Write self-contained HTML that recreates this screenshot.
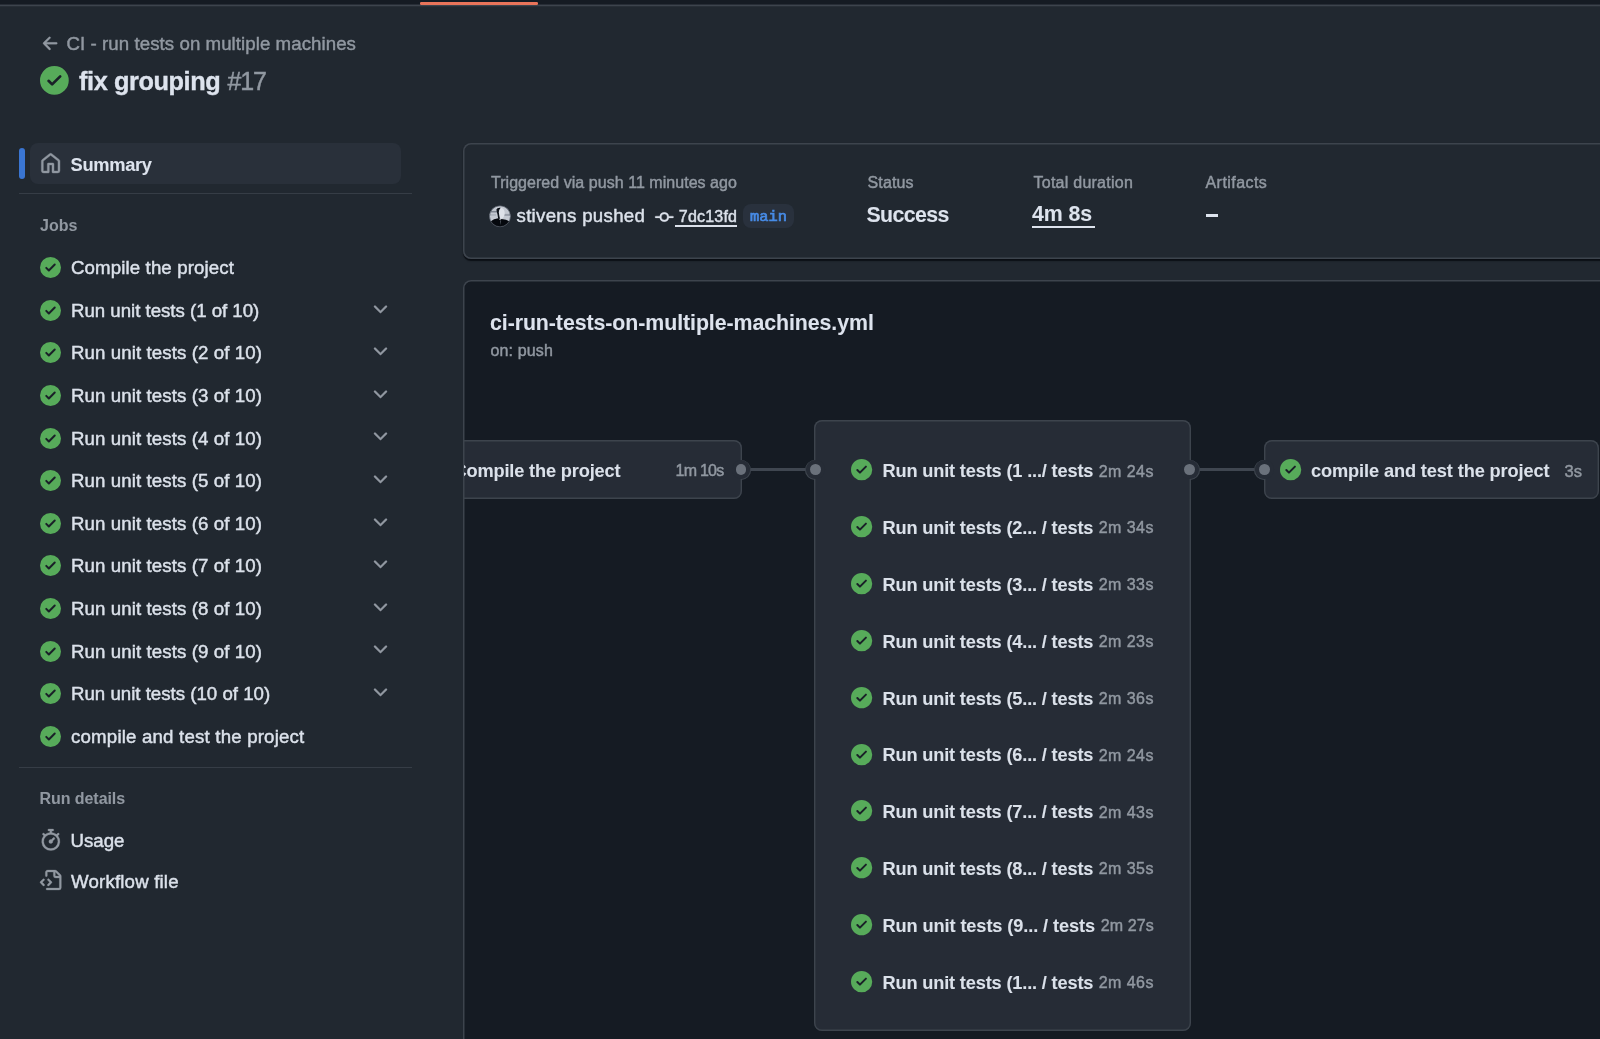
<!DOCTYPE html>
<html lang="en">
<head>
<meta charset="utf-8">
<title>fix grouping #17</title>
<style>
*{box-sizing:border-box;margin:0;padding:0}
html,body{width:1600px;height:1039px;overflow:hidden;background:#212830}
body{position:relative;font-family:"Liberation Sans",sans-serif;color:#dbe1ea}
#root{position:absolute;left:0;top:0;width:1600px;height:1039px;will-change:transform}
.abs{position:absolute}
.t{position:absolute;white-space:nowrap;line-height:1;-webkit-text-stroke:0.45px}
.t.bd{-webkit-text-stroke:0.05px}
svg{position:absolute;display:block;overflow:visible}
#strip{left:0;top:0;width:1600px;height:4px;background:#151b23}
#stripb{left:0;top:4px;width:1600px;height:3px;background:linear-gradient(#272d36 0 1px,#3d444d 1px 2px,#282f37 2px 3px)}
#tab{left:420.4px;top:1.8px;width:118px;height:3.2px;background:#e9745a;border-radius:1.3px}
#ind{left:19px;top:147.5px;width:5.5px;height:31.5px;background:#3a75d1;border-radius:3px}
#sel{left:30px;top:142.5px;width:370.5px;height:41.5px;background:#29303a;border-radius:8px}
.hr{height:1px;background:#363d46;left:19px;width:393px}
#card1{left:463.2px;top:142.8px;width:1160px;height:116.6px;border-radius:8px;background:#212830;box-shadow:inset 0 0 0 1.5px #3d444d,0 1.5px 1.2px rgba(1,4,9,.7)}
#card2{left:463.2px;top:280px;width:1160px;height:800px;border-radius:8px;background:#151b23}
#card2b{left:463.2px;top:280px;width:1160px;height:800px;border-radius:8px;box-shadow:inset 0 0 0 1.5px #3d444d}
#clip{left:463.8px;top:282px;width:1136px;height:757px;overflow:hidden}
.node{position:absolute;background:#262c36;box-shadow:inset 0 0 0 1.4px #3d444d;border-radius:8px}
.dot{position:absolute;width:10.8px;height:10.8px;border-radius:50%;background:#6a717b;box-shadow:0 0 0 4px #262c36}
.ring{position:absolute;width:20px;height:20px;border-radius:50%;background:#262c36;box-shadow:inset 0 0 0 1.4px #3d444d}
.line{position:absolute;height:2.7px;background:#3f4650}
</style>
</head>
<body>
<div id="root">
<div id="strip" class="abs"></div>
<div id="stripb" class="abs"></div>
<div id="tab" class="abs"></div>

<svg style="left:39.735px;top:32.535px" width="21.33" height="21.33" viewBox="0 0 16 16" fill="#9198a1" stroke="#9198a1" stroke-width="0.2"><path d="M7.78 12.53a.75.75 0 0 1-1.06 0L2.47 8.28a.75.75 0 0 1 0-1.06l4.25-4.25a.751.751 0 0 1 1.042.018.751.751 0 0 1 .018 1.042L4.81 7h7.44a.75.75 0 0 1 0 1.5H4.81l2.97 2.97a.75.75 0 0 1 0 1.06Z"/></svg>
<div class="t" id="crumb" style="left:66.5px;top:34.8958px;font-size:18.67px;color:#9198a1;letter-spacing:0.065px;">CI - run tests on multiple machines</div>
<svg style="left:40.025px;top:66.225px" width="28.75" height="28.75" viewBox="0 0 16 16"><circle cx="8" cy="8" r="6" fill="#1a2028"/><path fill="#57ab5a" d="M8 16A8 8 0 1 1 8 0a8 8 0 0 1 0 16Zm3.78-9.72a.751.751 0 0 0-.018-1.042.751.751 0 0 0-1.042-.018L6.75 9.19 5.28 7.72a.751.751 0 0 0-1.042.018.751.751 0 0 0-.018 1.042l2 2a.75.75 0 0 0 1.06 0Z"/></svg>
<div class="t bd" id="title" style="left:79px;top:68.5836px;font-size:25.3px;color:#dde3ed;font-weight:bold;letter-spacing:-0.4px;-webkit-text-stroke:0.35px;">fix grouping</div>
<div class="t" id="num" style="left:227.5px;top:68.8375px;font-size:25px;color:#9198a1;letter-spacing:-1.1px;">#17</div>
<div id="ind" class="abs"></div><div id="sel" class="abs"></div>
<svg style="left:39.7px;top:152.75px" width="21.3" height="21.3" viewBox="0 0 16 16" fill="#9198a1" stroke="#9198a1" stroke-width="0.3"><path d="M6.906.664a1.749 1.749 0 0 1 2.187 0l5.25 4.2c.415.332.657.835.657 1.367v7.019A1.75 1.75 0 0 1 13.25 15h-3.5a.75.75 0 0 1-.75-.75V9H7v5.25a.75.75 0 0 1-.75.75h-3.5A1.75 1.75 0 0 1 1 13.25V6.23c0-.531.242-1.034.657-1.366l5.25-4.2Zm1.25 1.171a.25.25 0 0 0-.312 0l-5.25 4.2a.25.25 0 0 0-.094.196v7.019c0 .138.112.25.25.25H5.5V8.25a.75.75 0 0 1 .75-.75h3.5a.75.75 0 0 1 .75.75v5.25h2.75a.25.25 0 0 0 .25-.25V6.23a.25.25 0 0 0-.094-.195Z"/></svg>
<div class="t bd" id="summary" style="left:70.5px;top:156.309px;font-size:18.3px;color:#dde3ed;font-weight:bold;letter-spacing:-0.3px;">Summary</div>
<div class="abs hr" style="top:193px"></div>
<div class="t bd" id="jobs" style="left:40px;top:218.256px;font-size:16px;color:#9198a1;font-weight:bold;">Jobs</div>
<svg style="left:39.9px;top:257.2px" width="21" height="21" viewBox="0 0 16 16"><circle cx="8" cy="8" r="6" fill="#1a2028"/><path fill="#57ab5a" d="M8 16A8 8 0 1 1 8 0a8 8 0 0 1 0 16Zm3.78-9.72a.751.751 0 0 0-.018-1.042.751.751 0 0 0-1.042-.018L6.75 9.19 5.28 7.72a.751.751 0 0 0-1.042.018.751.751 0 0 0-.018 1.042l2 2a.75.75 0 0 0 1.06 0Z"/></svg>
<div class="t" id="job0" style="left:71px;top:259.196px;font-size:18.67px;color:#dbe1ea;letter-spacing:0.12px;">Compile the project</div>
<svg style="left:39.9px;top:299.8px" width="21" height="21" viewBox="0 0 16 16"><circle cx="8" cy="8" r="6" fill="#1a2028"/><path fill="#57ab5a" d="M8 16A8 8 0 1 1 8 0a8 8 0 0 1 0 16Zm3.78-9.72a.751.751 0 0 0-.018-1.042.751.751 0 0 0-1.042-.018L6.75 9.19 5.28 7.72a.751.751 0 0 0-1.042.018.751.751 0 0 0-.018 1.042l2 2a.75.75 0 0 0 1.06 0Z"/></svg>
<div class="t" id="job1" style="left:71px;top:301.796px;font-size:18.67px;color:#dbe1ea;letter-spacing:-0.02px;">Run unit tests (1 of 10)</div>
<svg style="left:369.8px;top:298.6px" width="21" height="21" viewBox="0 0 16 16" fill="#9198a1" stroke="#9198a1" stroke-width="0.2"><path d="M12.78 5.22a.749.749 0 0 1 0 1.06l-4.25 4.25a.749.749 0 0 1-1.06 0L3.22 6.28a.749.749 0 1 1 1.06-1.06L8 8.939l3.72-3.719a.749.749 0 0 1 1.06 0Z"/></svg>
<svg style="left:39.9px;top:342.4px" width="21" height="21" viewBox="0 0 16 16"><circle cx="8" cy="8" r="6" fill="#1a2028"/><path fill="#57ab5a" d="M8 16A8 8 0 1 1 8 0a8 8 0 0 1 0 16Zm3.78-9.72a.751.751 0 0 0-.018-1.042.751.751 0 0 0-1.042-.018L6.75 9.19 5.28 7.72a.751.751 0 0 0-1.042.018.751.751 0 0 0-.018 1.042l2 2a.75.75 0 0 0 1.06 0Z"/></svg>
<div class="t" id="job2" style="left:71px;top:344.396px;font-size:18.67px;color:#dbe1ea;letter-spacing:0.1px;">Run unit tests (2 of 10)</div>
<svg style="left:369.8px;top:341.2px" width="21" height="21" viewBox="0 0 16 16" fill="#9198a1" stroke="#9198a1" stroke-width="0.2"><path d="M12.78 5.22a.749.749 0 0 1 0 1.06l-4.25 4.25a.749.749 0 0 1-1.06 0L3.22 6.28a.749.749 0 1 1 1.06-1.06L8 8.939l3.72-3.719a.749.749 0 0 1 1.06 0Z"/></svg>
<svg style="left:39.9px;top:385px" width="21" height="21" viewBox="0 0 16 16"><circle cx="8" cy="8" r="6" fill="#1a2028"/><path fill="#57ab5a" d="M8 16A8 8 0 1 1 8 0a8 8 0 0 1 0 16Zm3.78-9.72a.751.751 0 0 0-.018-1.042.751.751 0 0 0-1.042-.018L6.75 9.19 5.28 7.72a.751.751 0 0 0-1.042.018.751.751 0 0 0-.018 1.042l2 2a.75.75 0 0 0 1.06 0Z"/></svg>
<div class="t" id="job3" style="left:71px;top:386.996px;font-size:18.67px;color:#dbe1ea;letter-spacing:0.1px;">Run unit tests (3 of 10)</div>
<svg style="left:369.8px;top:383.8px" width="21" height="21" viewBox="0 0 16 16" fill="#9198a1" stroke="#9198a1" stroke-width="0.2"><path d="M12.78 5.22a.749.749 0 0 1 0 1.06l-4.25 4.25a.749.749 0 0 1-1.06 0L3.22 6.28a.749.749 0 1 1 1.06-1.06L8 8.939l3.72-3.719a.749.749 0 0 1 1.06 0Z"/></svg>
<svg style="left:39.9px;top:427.6px" width="21" height="21" viewBox="0 0 16 16"><circle cx="8" cy="8" r="6" fill="#1a2028"/><path fill="#57ab5a" d="M8 16A8 8 0 1 1 8 0a8 8 0 0 1 0 16Zm3.78-9.72a.751.751 0 0 0-.018-1.042.751.751 0 0 0-1.042-.018L6.75 9.19 5.28 7.72a.751.751 0 0 0-1.042.018.751.751 0 0 0-.018 1.042l2 2a.75.75 0 0 0 1.06 0Z"/></svg>
<div class="t" id="job4" style="left:71px;top:429.596px;font-size:18.67px;color:#dbe1ea;letter-spacing:0.1px;">Run unit tests (4 of 10)</div>
<svg style="left:369.8px;top:426.4px" width="21" height="21" viewBox="0 0 16 16" fill="#9198a1" stroke="#9198a1" stroke-width="0.2"><path d="M12.78 5.22a.749.749 0 0 1 0 1.06l-4.25 4.25a.749.749 0 0 1-1.06 0L3.22 6.28a.749.749 0 1 1 1.06-1.06L8 8.939l3.72-3.719a.749.749 0 0 1 1.06 0Z"/></svg>
<svg style="left:39.9px;top:470.2px" width="21" height="21" viewBox="0 0 16 16"><circle cx="8" cy="8" r="6" fill="#1a2028"/><path fill="#57ab5a" d="M8 16A8 8 0 1 1 8 0a8 8 0 0 1 0 16Zm3.78-9.72a.751.751 0 0 0-.018-1.042.751.751 0 0 0-1.042-.018L6.75 9.19 5.28 7.72a.751.751 0 0 0-1.042.018.751.751 0 0 0-.018 1.042l2 2a.75.75 0 0 0 1.06 0Z"/></svg>
<div class="t" id="job5" style="left:71px;top:472.196px;font-size:18.67px;color:#dbe1ea;letter-spacing:0.1px;">Run unit tests (5 of 10)</div>
<svg style="left:369.8px;top:469px" width="21" height="21" viewBox="0 0 16 16" fill="#9198a1" stroke="#9198a1" stroke-width="0.2"><path d="M12.78 5.22a.749.749 0 0 1 0 1.06l-4.25 4.25a.749.749 0 0 1-1.06 0L3.22 6.28a.749.749 0 1 1 1.06-1.06L8 8.939l3.72-3.719a.749.749 0 0 1 1.06 0Z"/></svg>
<svg style="left:39.9px;top:512.8px" width="21" height="21" viewBox="0 0 16 16"><circle cx="8" cy="8" r="6" fill="#1a2028"/><path fill="#57ab5a" d="M8 16A8 8 0 1 1 8 0a8 8 0 0 1 0 16Zm3.78-9.72a.751.751 0 0 0-.018-1.042.751.751 0 0 0-1.042-.018L6.75 9.19 5.28 7.72a.751.751 0 0 0-1.042.018.751.751 0 0 0-.018 1.042l2 2a.75.75 0 0 0 1.06 0Z"/></svg>
<div class="t" id="job6" style="left:71px;top:514.796px;font-size:18.67px;color:#dbe1ea;letter-spacing:0.1px;">Run unit tests (6 of 10)</div>
<svg style="left:369.8px;top:511.6px" width="21" height="21" viewBox="0 0 16 16" fill="#9198a1" stroke="#9198a1" stroke-width="0.2"><path d="M12.78 5.22a.749.749 0 0 1 0 1.06l-4.25 4.25a.749.749 0 0 1-1.06 0L3.22 6.28a.749.749 0 1 1 1.06-1.06L8 8.939l3.72-3.719a.749.749 0 0 1 1.06 0Z"/></svg>
<svg style="left:39.9px;top:555.4px" width="21" height="21" viewBox="0 0 16 16"><circle cx="8" cy="8" r="6" fill="#1a2028"/><path fill="#57ab5a" d="M8 16A8 8 0 1 1 8 0a8 8 0 0 1 0 16Zm3.78-9.72a.751.751 0 0 0-.018-1.042.751.751 0 0 0-1.042-.018L6.75 9.19 5.28 7.72a.751.751 0 0 0-1.042.018.751.751 0 0 0-.018 1.042l2 2a.75.75 0 0 0 1.06 0Z"/></svg>
<div class="t" id="job7" style="left:71px;top:557.396px;font-size:18.67px;color:#dbe1ea;letter-spacing:0.1px;">Run unit tests (7 of 10)</div>
<svg style="left:369.8px;top:554.2px" width="21" height="21" viewBox="0 0 16 16" fill="#9198a1" stroke="#9198a1" stroke-width="0.2"><path d="M12.78 5.22a.749.749 0 0 1 0 1.06l-4.25 4.25a.749.749 0 0 1-1.06 0L3.22 6.28a.749.749 0 1 1 1.06-1.06L8 8.939l3.72-3.719a.749.749 0 0 1 1.06 0Z"/></svg>
<svg style="left:39.9px;top:598px" width="21" height="21" viewBox="0 0 16 16"><circle cx="8" cy="8" r="6" fill="#1a2028"/><path fill="#57ab5a" d="M8 16A8 8 0 1 1 8 0a8 8 0 0 1 0 16Zm3.78-9.72a.751.751 0 0 0-.018-1.042.751.751 0 0 0-1.042-.018L6.75 9.19 5.28 7.72a.751.751 0 0 0-1.042.018.751.751 0 0 0-.018 1.042l2 2a.75.75 0 0 0 1.06 0Z"/></svg>
<div class="t" id="job8" style="left:71px;top:599.996px;font-size:18.67px;color:#dbe1ea;letter-spacing:0.1px;">Run unit tests (8 of 10)</div>
<svg style="left:369.8px;top:596.8px" width="21" height="21" viewBox="0 0 16 16" fill="#9198a1" stroke="#9198a1" stroke-width="0.2"><path d="M12.78 5.22a.749.749 0 0 1 0 1.06l-4.25 4.25a.749.749 0 0 1-1.06 0L3.22 6.28a.749.749 0 1 1 1.06-1.06L8 8.939l3.72-3.719a.749.749 0 0 1 1.06 0Z"/></svg>
<svg style="left:39.9px;top:640.6px" width="21" height="21" viewBox="0 0 16 16"><circle cx="8" cy="8" r="6" fill="#1a2028"/><path fill="#57ab5a" d="M8 16A8 8 0 1 1 8 0a8 8 0 0 1 0 16Zm3.78-9.72a.751.751 0 0 0-.018-1.042.751.751 0 0 0-1.042-.018L6.75 9.19 5.28 7.72a.751.751 0 0 0-1.042.018.751.751 0 0 0-.018 1.042l2 2a.75.75 0 0 0 1.06 0Z"/></svg>
<div class="t" id="job9" style="left:71px;top:642.596px;font-size:18.67px;color:#dbe1ea;letter-spacing:0.1px;">Run unit tests (9 of 10)</div>
<svg style="left:369.8px;top:639.4px" width="21" height="21" viewBox="0 0 16 16" fill="#9198a1" stroke="#9198a1" stroke-width="0.2"><path d="M12.78 5.22a.749.749 0 0 1 0 1.06l-4.25 4.25a.749.749 0 0 1-1.06 0L3.22 6.28a.749.749 0 1 1 1.06-1.06L8 8.939l3.72-3.719a.749.749 0 0 1 1.06 0Z"/></svg>
<svg style="left:39.9px;top:683.2px" width="21" height="21" viewBox="0 0 16 16"><circle cx="8" cy="8" r="6" fill="#1a2028"/><path fill="#57ab5a" d="M8 16A8 8 0 1 1 8 0a8 8 0 0 1 0 16Zm3.78-9.72a.751.751 0 0 0-.018-1.042.751.751 0 0 0-1.042-.018L6.75 9.19 5.28 7.72a.751.751 0 0 0-1.042.018.751.751 0 0 0-.018 1.042l2 2a.75.75 0 0 0 1.06 0Z"/></svg>
<div class="t" id="job10" style="left:71px;top:685.196px;font-size:18.67px;color:#dbe1ea;">Run unit tests (10 of 10)</div>
<svg style="left:369.8px;top:682px" width="21" height="21" viewBox="0 0 16 16" fill="#9198a1" stroke="#9198a1" stroke-width="0.2"><path d="M12.78 5.22a.749.749 0 0 1 0 1.06l-4.25 4.25a.749.749 0 0 1-1.06 0L3.22 6.28a.749.749 0 1 1 1.06-1.06L8 8.939l3.72-3.719a.749.749 0 0 1 1.06 0Z"/></svg>
<svg style="left:39.9px;top:725.8px" width="21" height="21" viewBox="0 0 16 16"><circle cx="8" cy="8" r="6" fill="#1a2028"/><path fill="#57ab5a" d="M8 16A8 8 0 1 1 8 0a8 8 0 0 1 0 16Zm3.78-9.72a.751.751 0 0 0-.018-1.042.751.751 0 0 0-1.042-.018L6.75 9.19 5.28 7.72a.751.751 0 0 0-1.042.018.751.751 0 0 0-.018 1.042l2 2a.75.75 0 0 0 1.06 0Z"/></svg>
<div class="t" id="job11" style="left:71px;top:727.796px;font-size:18.67px;color:#dbe1ea;letter-spacing:0.19px;">compile and test the project</div>
<div class="abs hr" style="top:766.5px"></div>
<div class="t bd" id="rundetails" style="left:39.5px;top:791.356px;font-size:16px;color:#9198a1;font-weight:bold;letter-spacing:-0.06px;">Run details</div>
<svg style="left:39.585px;top:828.885px" width="21.63" height="21.63" viewBox="0 0 16 16" fill="#9198a1" stroke="#9198a1" stroke-width="0.2"><path d="M5.75.75A.75.75 0 0 1 6.5 0h3a.75.75 0 0 1 0 1.5h-.75v1l-.001.041a6.724 6.724 0 0 1 3.464 1.435l.007-.006.75-.75a.749.749 0 0 1 1.275.326.749.749 0 0 1-.215.734l-.75.75-.006.007a6.75 6.75 0 1 1-10.548 0L2.72 5.03l-.75-.75a.751.751 0 0 1 .018-1.042.751.751 0 0 1 1.042-.018l.75.75.007.006A6.72 6.72 0 0 1 7.25 2.541V1.5H6.5a.75.75 0 0 1-.75-.75ZM8 14.5a5.25 5.25 0 1 0-.001-10.501A5.25 5.25 0 0 0 8 14.5Zm.389-6.7 1.33-1.33a.75.75 0 1 1 1.061 1.06L9.45 8.861A1.503 1.503 0 0 1 8 10.75a1.499 1.499 0 1 1 .389-2.95Z"/></svg>
<div class="t" id="usage" style="left:70.5px;top:831.996px;font-size:18.67px;color:#dbe1ea;">Usage</div>
<svg style="left:39.935px;top:869.935px" width="21.33" height="21.33" viewBox="0 0 16 16" fill="#9198a1" stroke="#9198a1" stroke-width="0.2"><path d="M4 1.75C4 .784 4.784 0 5.75 0h5.586c.464 0 .909.184 1.237.513l2.914 2.914c.329.328.513.773.513 1.237v8.586A1.75 1.75 0 0 1 14.25 15h-9a.75.75 0 0 1 0-1.5h9a.25.25 0 0 0 .25-.25V6h-2.75A1.75 1.75 0 0 1 10 4.25V1.5H5.75a.25.25 0 0 0-.25.25v2.5a.75.75 0 0 1-1.5 0Zm1.72 4.97a.75.75 0 0 1 1.06 0l2 2a.75.75 0 0 1 0 1.06l-2 2a.749.749 0 0 1-1.275-.326.749.749 0 0 1 .215-.734l1.47-1.47-1.47-1.47a.75.75 0 0 1 0-1.06ZM3.28 7.78 1.81 9.25l1.47 1.47a.751.751 0 0 1-.018 1.042.751.751 0 0 1-1.042.018l-2-2a.75.75 0 0 1 0-1.06l2-2a.751.751 0 0 1 1.042.018.751.751 0 0 1 .018 1.042Zm8.22-6.218V4.25c0 .138.112.25.25.25h2.688l-.011-.013-2.914-2.914-.013-.011Z"/></svg>
<div class="t" id="wf" style="left:71px;top:872.996px;font-size:18.67px;color:#dbe1ea;letter-spacing:0.18px;">Workflow file</div>
<div id="card1" class="abs"></div>
<div class="t" id="trig" style="left:491px;top:174.756px;font-size:16px;color:#9198a1;letter-spacing:0.04px;">Triggered via push 11 minutes ago</div>
<svg style="left:489.3px;top:205px" width="22" height="22.6" viewBox="0 0 22 22"><defs><clipPath id="av"><circle cx="11" cy="11" r="10.6"/></clipPath></defs><g clip-path="url(#av)"><rect width="22" height="22" fill="#c3c8d1"/><rect x="0" y="5.6" width="8.5" height="1.6" fill="#7e8590"/><rect x="0" y="9" width="7" height="1.3" fill="#a7adb7"/><rect x="14.5" y="8.6" width="7.5" height="2" fill="#979da8"/><ellipse cx="12.4" cy="8" rx="3.3" ry="5.4" fill="#dde1e8"/><path d="M7.4 4.2Q8 2 11.6 2.4Q9.6 4.6 9.8 7.2Q10.2 10.4 11 13.4L9.2 13.6Q8.6 9 7.8 6.4Z" fill="#0d1219"/><path d="M1 16.4Q5 13.2 9.2 13L11 14.8L12.6 13.8Q17 14 21 16.2L21 22L1 22Z" fill="#05080d"/><path d="M11.2 15.2L11.6 20L12 15.2Z" fill="#6b727d"/></g><circle cx="11" cy="11" r="10.5" fill="none" stroke="#4a525d" stroke-width="0.7"/></svg>
<div class="t" id="push" style="left:516.5px;top:206.896px;font-size:18.67px;color:#dbe1ea;letter-spacing:0.3px;">stivens pushed</div>
<svg style="left:655.2px;top:207.5px" width="18.6" height="18.6" viewBox="0 0 16 16" fill="#dbe1ea" stroke="#dbe1ea" stroke-width="0.25"><path d="M11.93 8.5a4.002 4.002 0 0 1-7.86 0H.75a.75.75 0 0 1 0-1.5h3.32a4.002 4.002 0 0 1 7.86 0h3.32a.75.75 0 0 1 0 1.5Zm-1.43-.75a2.5 2.5 0 1 0-5 0 2.5 2.5 0 0 0 5 0Z"/></svg>
<div class="t" id="sha" style="left:678.8px;top:208.656px;font-size:16px;color:#dbe1ea;letter-spacing:0.2px;">7dc13fd</div>
<div class="abs" style="left:675px;top:225.4px;width:61.8px;height:1.6px;background:#dbe1ea"></div>
<div class="abs" style="left:742.5px;top:203.5px;width:51.5px;height:24.8px;border-radius:8px;background:#29313d"></div>
<div class="t" id="main" style="left:750px;top:209.964px;font-size:15.4px;color:#478be6;font-family:&quot;Liberation Mono&quot;,monospace;-webkit-text-stroke:0.7px;">main</div>
<div class="t" id="status" style="left:867.5px;top:174.756px;font-size:16px;color:#9198a1;letter-spacing:0.15px;">Status</div>
<div class="t bd" id="success" style="left:866.5px;top:204.744px;font-size:21.33px;color:#dde3ed;font-weight:bold;letter-spacing:-0.63px;">Success</div>
<div class="t" id="totdur" style="left:1033.5px;top:174.756px;font-size:16px;color:#9198a1;letter-spacing:0.25px;">Total duration</div>
<div class="t bd" id="dur" style="left:1032px;top:204.244px;font-size:21.33px;color:#dde3ed;font-weight:bold;letter-spacing:-0.1px;">4m 8s</div>
<div class="abs" style="left:1032px;top:225.5px;width:62.5px;height:2px;background:#dde3ed"></div>
<div class="t" id="artifacts" style="left:1205.5px;top:174.756px;font-size:16px;color:#9198a1;letter-spacing:0.44px;">Artifacts</div>
<div class="abs" style="left:1205.5px;top:213.5px;width:12px;height:3px;background:#dde3ed"></div>
<div id="card2" class="abs"></div>
<div class="t bd" id="yml" style="left:490px;top:312.944px;font-size:21.33px;color:#dde3ed;font-weight:bold;letter-spacing:-0.07px;">ci-run-tests-on-multiple-machines.yml</div>
<div class="t" id="onpush" style="left:490.5px;top:342.556px;font-size:16px;color:#9198a1;letter-spacing:0.13px;">on: push</div>
<div id="clip" class="abs">
<div class="line" style="left:278.2px;top:186.1px;width:72px"></div>
<div class="line" style="left:727.2px;top:186.1px;width:73px"></div>
<div class="ring" style="left:267.2px;top:177.5px"></div>
<div class="ring" style="left:341.4px;top:177.5px"></div>
<div class="ring" style="left:716px;top:177.5px"></div>
<div class="ring" style="left:790.7px;top:177.5px"></div>
<div class="node" style="left:-63.8px;top:158px;width:342.3px;height:59px"></div>
<div class="node" style="left:350.2px;top:137.5px;width:377px;height:611px"></div>
<div class="node" style="left:800px;top:158px;width:335px;height:59px"></div>
<div class="dot" style="left:271.8px;top:182.1px"></div>
<div class="dot" style="left:346px;top:182.1px"></div>
<div class="dot" style="left:720.6px;top:182.1px"></div>
<div class="dot" style="left:795.3px;top:182.1px"></div>
</div>
<div id="card2b" class="abs"></div>
<div class="abs" style="left:464px;top:441px;width:270px;height:57px;overflow:hidden"><div class="t bd" id="n1" style="left:-10.5px;top:20.8937px;font-size:18.2px;color:#dbe1ea;font-weight:bold;letter-spacing:-0.15px;">Compile the project</div></div>
<div class="t" id="n1d" style="left:675.5px;top:463.056px;font-size:16px;color:#9198a1;letter-spacing:-0.75px;">1m 10s</div>
<svg style="left:851.275px;top:459.375px" width="21.25" height="21.25" viewBox="0 0 16 16"><circle cx="8" cy="8" r="6" fill="#1a2028"/><path fill="#57ab5a" d="M8 16A8 8 0 1 1 8 0a8 8 0 0 1 0 16Zm3.78-9.72a.751.751 0 0 0-.018-1.042.751.751 0 0 0-1.042-.018L6.75 9.19 5.28 7.72a.751.751 0 0 0-1.042.018.751.751 0 0 0-.018 1.042l2 2a.75.75 0 0 0 1.06 0Z"/></svg>
<div class="t bd" id="r0" style="left:882.5px;top:462.194px;font-size:18.2px;color:#dbe1ea;font-weight:bold;letter-spacing:-0.16px;">Run unit tests (1 .../ tests</div>
<div class="t" id="r0d" style="right:446.1px;top:463.656px;font-size:16px;color:#9198a1;letter-spacing:0.45px;">2m 24s</div>
<svg style="left:851.275px;top:516.205px" width="21.25" height="21.25" viewBox="0 0 16 16"><circle cx="8" cy="8" r="6" fill="#1a2028"/><path fill="#57ab5a" d="M8 16A8 8 0 1 1 8 0a8 8 0 0 1 0 16Zm3.78-9.72a.751.751 0 0 0-.018-1.042.751.751 0 0 0-1.042-.018L6.75 9.19 5.28 7.72a.751.751 0 0 0-1.042.018.751.751 0 0 0-.018 1.042l2 2a.75.75 0 0 0 1.06 0Z"/></svg>
<div class="t bd" id="r1" style="left:882.5px;top:519.024px;font-size:18.2px;color:#dbe1ea;font-weight:bold;letter-spacing:-0.16px;">Run unit tests (2... / tests</div>
<div class="t" id="r1d" style="right:446.1px;top:520.486px;font-size:16px;color:#9198a1;letter-spacing:0.45px;">2m 34s</div>
<svg style="left:851.275px;top:573.035px" width="21.25" height="21.25" viewBox="0 0 16 16"><circle cx="8" cy="8" r="6" fill="#1a2028"/><path fill="#57ab5a" d="M8 16A8 8 0 1 1 8 0a8 8 0 0 1 0 16Zm3.78-9.72a.751.751 0 0 0-.018-1.042.751.751 0 0 0-1.042-.018L6.75 9.19 5.28 7.72a.751.751 0 0 0-1.042.018.751.751 0 0 0-.018 1.042l2 2a.75.75 0 0 0 1.06 0Z"/></svg>
<div class="t bd" id="r2" style="left:882.5px;top:575.854px;font-size:18.2px;color:#dbe1ea;font-weight:bold;letter-spacing:-0.16px;">Run unit tests (3... / tests</div>
<div class="t" id="r2d" style="right:446.1px;top:577.316px;font-size:16px;color:#9198a1;letter-spacing:0.45px;">2m 33s</div>
<svg style="left:851.275px;top:629.865px" width="21.25" height="21.25" viewBox="0 0 16 16"><circle cx="8" cy="8" r="6" fill="#1a2028"/><path fill="#57ab5a" d="M8 16A8 8 0 1 1 8 0a8 8 0 0 1 0 16Zm3.78-9.72a.751.751 0 0 0-.018-1.042.751.751 0 0 0-1.042-.018L6.75 9.19 5.28 7.72a.751.751 0 0 0-1.042.018.751.751 0 0 0-.018 1.042l2 2a.75.75 0 0 0 1.06 0Z"/></svg>
<div class="t bd" id="r3" style="left:882.5px;top:632.684px;font-size:18.2px;color:#dbe1ea;font-weight:bold;letter-spacing:-0.16px;">Run unit tests (4... / tests</div>
<div class="t" id="r3d" style="right:446.1px;top:634.146px;font-size:16px;color:#9198a1;letter-spacing:0.45px;">2m 23s</div>
<svg style="left:851.275px;top:686.695px" width="21.25" height="21.25" viewBox="0 0 16 16"><circle cx="8" cy="8" r="6" fill="#1a2028"/><path fill="#57ab5a" d="M8 16A8 8 0 1 1 8 0a8 8 0 0 1 0 16Zm3.78-9.72a.751.751 0 0 0-.018-1.042.751.751 0 0 0-1.042-.018L6.75 9.19 5.28 7.72a.751.751 0 0 0-1.042.018.751.751 0 0 0-.018 1.042l2 2a.75.75 0 0 0 1.06 0Z"/></svg>
<div class="t bd" id="r4" style="left:882.5px;top:689.514px;font-size:18.2px;color:#dbe1ea;font-weight:bold;letter-spacing:-0.16px;">Run unit tests (5... / tests</div>
<div class="t" id="r4d" style="right:446.1px;top:690.976px;font-size:16px;color:#9198a1;letter-spacing:0.45px;">2m 36s</div>
<svg style="left:851.275px;top:743.525px" width="21.25" height="21.25" viewBox="0 0 16 16"><circle cx="8" cy="8" r="6" fill="#1a2028"/><path fill="#57ab5a" d="M8 16A8 8 0 1 1 8 0a8 8 0 0 1 0 16Zm3.78-9.72a.751.751 0 0 0-.018-1.042.751.751 0 0 0-1.042-.018L6.75 9.19 5.28 7.72a.751.751 0 0 0-1.042.018.751.751 0 0 0-.018 1.042l2 2a.75.75 0 0 0 1.06 0Z"/></svg>
<div class="t bd" id="r5" style="left:882.5px;top:746.344px;font-size:18.2px;color:#dbe1ea;font-weight:bold;letter-spacing:-0.16px;">Run unit tests (6... / tests</div>
<div class="t" id="r5d" style="right:446.1px;top:747.806px;font-size:16px;color:#9198a1;letter-spacing:0.45px;">2m 24s</div>
<svg style="left:851.275px;top:800.355px" width="21.25" height="21.25" viewBox="0 0 16 16"><circle cx="8" cy="8" r="6" fill="#1a2028"/><path fill="#57ab5a" d="M8 16A8 8 0 1 1 8 0a8 8 0 0 1 0 16Zm3.78-9.72a.751.751 0 0 0-.018-1.042.751.751 0 0 0-1.042-.018L6.75 9.19 5.28 7.72a.751.751 0 0 0-1.042.018.751.751 0 0 0-.018 1.042l2 2a.75.75 0 0 0 1.06 0Z"/></svg>
<div class="t bd" id="r6" style="left:882.5px;top:803.174px;font-size:18.2px;color:#dbe1ea;font-weight:bold;letter-spacing:-0.16px;">Run unit tests (7... / tests</div>
<div class="t" id="r6d" style="right:446.1px;top:804.636px;font-size:16px;color:#9198a1;letter-spacing:0.45px;">2m 43s</div>
<svg style="left:851.275px;top:857.185px" width="21.25" height="21.25" viewBox="0 0 16 16"><circle cx="8" cy="8" r="6" fill="#1a2028"/><path fill="#57ab5a" d="M8 16A8 8 0 1 1 8 0a8 8 0 0 1 0 16Zm3.78-9.72a.751.751 0 0 0-.018-1.042.751.751 0 0 0-1.042-.018L6.75 9.19 5.28 7.72a.751.751 0 0 0-1.042.018.751.751 0 0 0-.018 1.042l2 2a.75.75 0 0 0 1.06 0Z"/></svg>
<div class="t bd" id="r7" style="left:882.5px;top:860.004px;font-size:18.2px;color:#dbe1ea;font-weight:bold;letter-spacing:-0.16px;">Run unit tests (8... / tests</div>
<div class="t" id="r7d" style="right:446.1px;top:861.466px;font-size:16px;color:#9198a1;letter-spacing:0.45px;">2m 35s</div>
<svg style="left:851.275px;top:914.015px" width="21.25" height="21.25" viewBox="0 0 16 16"><circle cx="8" cy="8" r="6" fill="#1a2028"/><path fill="#57ab5a" d="M8 16A8 8 0 1 1 8 0a8 8 0 0 1 0 16Zm3.78-9.72a.751.751 0 0 0-.018-1.042.751.751 0 0 0-1.042-.018L6.75 9.19 5.28 7.72a.751.751 0 0 0-1.042.018.751.751 0 0 0-.018 1.042l2 2a.75.75 0 0 0 1.06 0Z"/></svg>
<div class="t bd" id="r8" style="left:882.5px;top:916.834px;font-size:18.2px;color:#dbe1ea;font-weight:bold;letter-spacing:-0.1px;">Run unit tests (9... / tests</div>
<div class="t" id="r8d" style="right:446.1px;top:918.296px;font-size:16px;color:#9198a1;letter-spacing:0.12px;">2m 27s</div>
<svg style="left:851.275px;top:970.845px" width="21.25" height="21.25" viewBox="0 0 16 16"><circle cx="8" cy="8" r="6" fill="#1a2028"/><path fill="#57ab5a" d="M8 16A8 8 0 1 1 8 0a8 8 0 0 1 0 16Zm3.78-9.72a.751.751 0 0 0-.018-1.042.751.751 0 0 0-1.042-.018L6.75 9.19 5.28 7.72a.751.751 0 0 0-1.042.018.751.751 0 0 0-.018 1.042l2 2a.75.75 0 0 0 1.06 0Z"/></svg>
<div class="t bd" id="r9" style="left:882.5px;top:973.664px;font-size:18.2px;color:#dbe1ea;font-weight:bold;letter-spacing:-0.16px;">Run unit tests (1... / tests</div>
<div class="t" id="r9d" style="right:446.1px;top:975.126px;font-size:16px;color:#9198a1;letter-spacing:0.45px;">2m 46s</div>
<svg style="left:1279.97px;top:459.375px" width="21.25" height="21.25" viewBox="0 0 16 16"><circle cx="8" cy="8" r="6" fill="#1a2028"/><path fill="#57ab5a" d="M8 16A8 8 0 1 1 8 0a8 8 0 0 1 0 16Zm3.78-9.72a.751.751 0 0 0-.018-1.042.751.751 0 0 0-1.042-.018L6.75 9.19 5.28 7.72a.751.751 0 0 0-1.042.018.751.751 0 0 0-.018 1.042l2 2a.75.75 0 0 0 1.06 0Z"/></svg>
<div class="t bd" id="n3" style="left:1311px;top:462.294px;font-size:18.2px;color:#dbe1ea;font-weight:bold;letter-spacing:-0.11px;">compile and test the project</div>
<div class="t" id="n3d" style="left:1564.5px;top:462.833px;font-size:16.5px;color:#9198a1;">3s</div>
</div>
</body>
</html>
